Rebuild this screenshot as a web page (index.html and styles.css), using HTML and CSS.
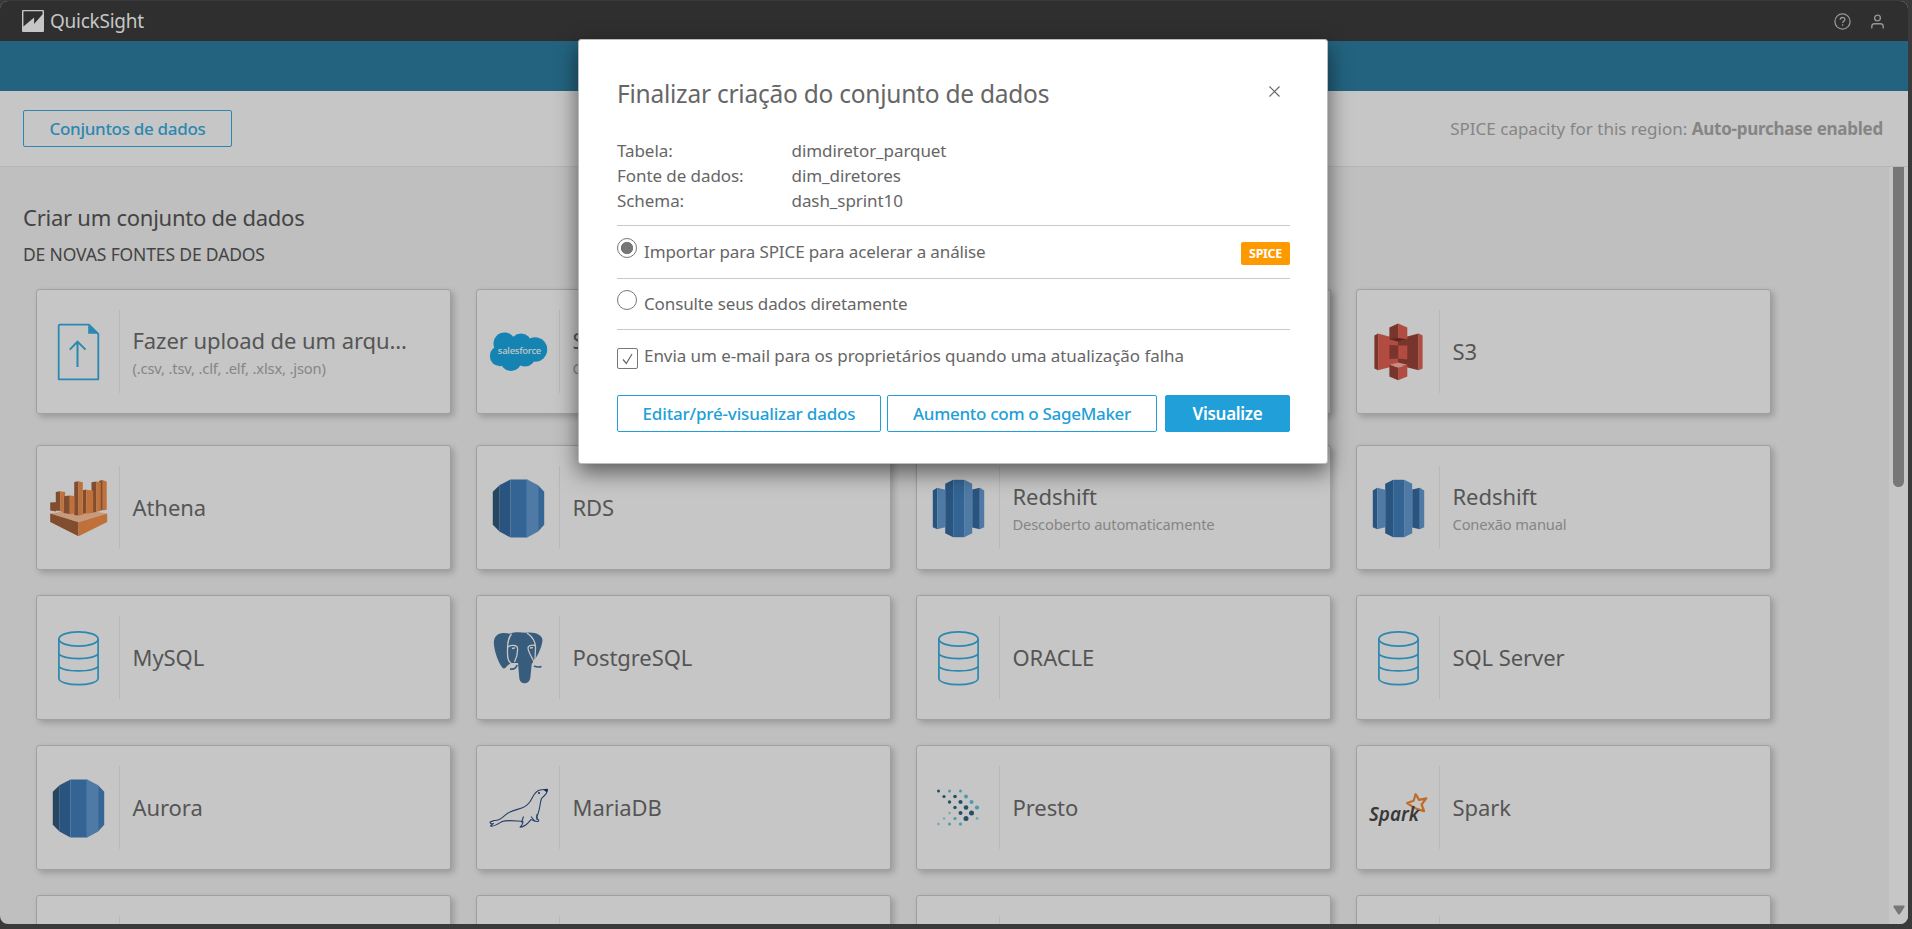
FILE: index.html
```html
<!DOCTYPE html>
<html lang="pt-BR">
<head>
<meta charset="utf-8">
<title>QuickSight</title>
<link rel="stylesheet" href="styles.css">
</head>
<body>
<svg class="defs" width="0" height="0">
  <symbol id="file" viewBox="0 0 60 60"><path d="M11.5 2.7H41L50.3 12V57.3H10.7V3.5z" fill="none" stroke="#2b88b0" stroke-width="1.8" stroke-linejoin="round"/><path d="M40.2 3v8.8h10z" fill="#2b88b0"/><path d="M29.5 45V20M21.8 27.6l7.7-8 8 8" fill="none" stroke="#2b88b0" stroke-width="2"/></symbol>
  <symbol id="athena" viewBox="0 0 60 60"><path d="M2.200 35.500 30.500 31l28.700 4.500-28.700 8.800z" fill="#c79a7c"/><g fill="#824d2f"><path d="M2.200 24.500l5.600-.5v9.500l-5.600-1zM7.800 14l4.400-.7V33l-4.400-.5zM15.500 18.200l6.300-.7V36l-6.300-1zM26.200 4l4.300-.7v34.200l-4.300-.6zM34.800 12.200l3.400-.7V35l-3.400 1zM43.500 4.200l5-.7V34l-5 .5zM51.200 2.700l3.600-.7v30l-3.600.8zM2.200 35.500l28.300 8.700v14L2.200 44z"/></g><g fill="#c0713a"><path d="M12.200 13.300l5 .7v4l-1.700.2V34l-3.300-.5zM21.800 17.500l4.400.6v17.500l-4.400.6zM30.500 3.300l4.300 1v32.500l-4.300.8zM38.200 11.700l7 1v22l-7 1zM48.500 3.500l4.300.8V33l-4.300.8zM54.800 2.200l3.900 1.200v28.400l-3.900.7zM59.200 35.500v8.500L30.500 58.200v-14z"/></g></symbol>
  <symbol id="rds" viewBox="0 0 60 60"><path fill="#26475f" d="M4.800 13.800l6.700-6.600v46.300l-6.700-6.700z"/><path fill="#2a5480" d="M11.400 7.200l11.100-5.700v58l-11.100-6z"/><path fill="#336493" d="M22.500 1.500h16.700v58H22.500z"/><path fill="#4e7aa5" d="M38.500 1.500h.7l11 5.700v46.300l-11 6h-.7z"/><path fill="#356696" d="M50.100 7.200l6.100 6.600v33l-6.100 6.700z"/></symbol>
  <symbol id="redshift" viewBox="0 0 60 60"><path fill="#2a5480" d="M4.800 12.500l4.400-2.700v41.400l-4.400-2zM44.200 11.600l7.600-1.800v41.400l-7.600-1.700zM17.200 5.800l8-4v57.400l-8-4z"/><path fill="#4e7aa5" d="M9.200 9.800l8 1.900v37.600l-8 1.900zM51.800 9.800l4.400 2.700v36.700l-4.400 2zM36.200 1.800l8 4v49.400l-8 4z"/><path fill="#336493" d="M25.200 1.800h11v57.400h-11z"/></symbol>
  <symbol id="db" viewBox="0 0 60 60"><g fill="none" stroke="#2b88b0" stroke-width="1.700"><ellipse cx="30.500" cy="11" rx="19.600" ry="7.200"/><path d="M10.900 11v39.500c1 8.200 38.200 8.200 39.200 0V11M10.900 25.500c3 6.700 36.200 6.700 39.200 0M10.900 38c3 6.600 36.200 6.600 39.200 0"/></g></symbol>
  <symbol id="s3" viewBox="0 0 60 60"><path fill="#77352c" d="M6.400 13.500l3.700-2v36.700l-3.700-1.700zM50.600 11.500v36.700L30 43V17z"/><path fill="#b24c41" d="M10.100 11.500L30 17v26l-19.900 5.200zM50.600 11.500l4 2v33l-4 1.700z"/><path fill="#b24c41" d="M30.100 1.500l9.200 4v11.700l-9.200 2.300zM30.100 23.500h9.200v14l-9.200-1zM30.100 45.500l9.200-2.700v11.700l-9.200 3.700z"/><path fill="#77352c" d="M30.100 1.500l-8.700 4v11.700l8.700 2.300zM30.100 23.500l-8.700-.5v14l8.700-.5zM30.100 45.500l-8.700-2.700v11.700l8.700 3.700z"/><path fill="#582722" d="M21.400 17.200l8.700-1.200 9.200 1.200-9.200 2.300z"/><path fill="#ca8982" d="M21.400 42.800l8.700-2.300 9.200 2.300-9.200 2.500z"/></symbol>
  <symbol id="postgres" viewBox="0 0 60 60"><path fill="#385c7c" d="M22 5.700C15 4 6.500 4.500 5.800 14c.2 8 3.500 18 7.700 24.500 1.800 3 3.500 2.500 6-1L23 35h7l1.300 15c.5 7 10 7 11 0l1.400-14C48 31 54 20 54.500 12 54 6 45 3.300 38 4.800 33 4.300 27 3.500 22 5.700z"/><path d="M23.500 6c-4.500 5-4 13-4 20 0 6 2 9 5 10.500M39 5c6 4 9 9 8.500 16-.5 6 0 9-1 13M20 19c3.500-2.500 9-2 9.500 1 .5 6-.5 9-3 14M48 18c-3-1.500-8-1-8 2 .5 5 4 9 6.500 15" fill="none" stroke="#c6c6c6" stroke-width="1.300"/><path d="M22 41c3 .5 6 0 7-4M46 38c2 1 5 1.300 7.500.5" fill="none" stroke="#385c7c" stroke-width="1.600"/><path d="M24 20.500l3-.6M42 20l3-.4" stroke="#c6c6c6" stroke-width="1.400"/></symbol>
  <symbol id="mariadb" viewBox="0 0 60 60"><g fill="none" stroke="#263f68" stroke-width="1.100" stroke-linejoin="round"><path d="M2 44c2-.5 3-1 4-1.500 7 1 10-6 16-8.500 8-4 14-2.500 19-9 4-5 5-12 11-13 3-.5 5-.5 7.500-.8.3 5-3.500 6.500-6 9.300-2 6-1.500 13-5 18.500.5 2.500 3.500 3 1.500 4.500-2 .5-4-1-7-2-2.500 3-5 7-11 7.700 1-1.500 3-2 3-5.700-8-.5-15-2-21 0-4 2.500-8 5.500-11.500 4.500 0-1 3-2 3-2.500C4.500 46 2 46 2 44z"/><path d="M33.500 44.500l2-6M43 38.500l4 5M49 36v6"/></g><path fill="#172e50" d="M55 11.500l4.500-.5-.5 3.500zM50 15a1 1 0 1 0 2 0 1 1 0 0 0-2 0z"/></symbol>
  <symbol id="presto" viewBox="0 0 60 60"><g fill="#235064"><circle cx="10.500" cy="13" r="1.500"/><circle cx="16" cy="18.500" r="1.600"/><circle cx="21.500" cy="24" r="1.700"/><circle cx="27" cy="18.500" r="1.800"/><circle cx="32.500" cy="24" r="2.100"/><circle cx="27" cy="29.500" r="1.700"/><circle cx="38" cy="29.500" r="2.300"/><circle cx="32.500" cy="35" r="2"/><circle cx="43.500" cy="35" r="2.500"/><circle cx="38" cy="40.500" r="2.500"/></g><g fill="#4d98ae"><circle cx="21.500" cy="13" r="1.500"/><circle cx="32.500" cy="13" r="1.500"/><circle cx="38" cy="18.500" r="1.900"/><circle cx="43.500" cy="24" r="2"/><circle cx="49" cy="29.500" r="2.100"/><circle cx="27" cy="40.500" r="1.600"/><circle cx="21.500" cy="46" r="1.500"/><circle cx="32.500" cy="46" r="1.600"/></g><g fill="#75a9b6"><circle cx="49" cy="40.500" r="1.400"/><circle cx="16" cy="40.500" r="1.200"/><circle cx="21.500" cy="35" r="1.200"/><circle cx="10.500" cy="46" r="1.300"/></g></symbol>
</svg>

<div class="window">
  <header class="topbar">
    <div class="brand">
      <svg width="20" height="22" viewBox="0 0 20 22" preserveAspectRatio="none"><rect width="20" height="22" rx="1" fill="#c6c6c6"/><path d="M1.300 1.300h17.400v3L11 14V7.500L1.300 16.500z" fill="#2f2f2f"/></svg>
      <span>QuickSight</span>
    </div>
    <div class="tools">
      <svg width="17" height="17" viewBox="0 0 17 17" fill="none" stroke="#969696" stroke-width="1.300"><circle cx="8.500" cy="8.500" r="7.600"/><path d="M6.200 6.800c0-3 4.800-3 4.800-.3 0 1.700-2.400 1.600-2.400 3.500M8.600 11.300v1.500"/></svg>
      <svg width="13" height="15" viewBox="0 0 13 15" fill="none" stroke="#969696" stroke-width="1.400"><circle cx="6.500" cy="4" r="2.900"/><path d="M.8 14.500v-2c0-1.500 1-2.800 2.600-2.800h6.200c1.600 0 2.600 1.300 2.600 2.800v2"/></svg>
    </div>
  </header>
  <div class="bluebar"></div>
  <div class="subheader">
    <button class="btn btn-dim">Conjuntos de dados</button>
    <p class="capacity">SPICE capacity for this region: <b>Auto-purchase enabled</b></p>
  </div>
  <div class="body">
    <main class="content">
      <h1>Criar um conjunto de dados</h1>
      <h2>DE NOVAS FONTES DE DADOS</h2>
      <div class="grid first">
        <div class="card"><div class="icon"><svg><use href="#file"/></svg></div><div class="label two"><strong>Fazer upload de um arqu…</strong><small>(.csv, .tsv, .clf, .elf, .xlsx, .json)</small></div></div>
        <div class="card"><div class="icon"><svg viewBox="0 -10 60 60"><g fill="#1684b2"><circle cx="16.500" cy="11.500" r="11"/><circle cx="33" cy="12" r="10.500"/><circle cx="47" cy="17.500" r="12.200"/><circle cx="12" cy="24" r="10.200"/><circle cx="23" cy="28.500" r="10.500"/><circle cx="37" cy="24" r="10.500"/><path d="M14 10h30v20H14z"/></g><text x="9.800" y="22" textLength="43.500" class="sf-word">salesforce</text></svg></div><div class="label two"><strong>Salesforce</strong><small>Conecte-se ao Salesforce</small></div></div>
        <div class="card"></div>
        <div class="card"><div class="icon"><svg><use href="#s3"/></svg></div><div class="label"><strong>S3</strong></div></div>
      </div>
      <div class="grid">
        <div class="card"><div class="icon"><svg><use href="#athena"/></svg></div><div class="label"><strong>Athena</strong></div></div>
        <div class="card"><div class="icon"><svg><use href="#rds"/></svg></div><div class="label"><strong>RDS</strong></div></div>
        <div class="card"><div class="icon"><svg><use href="#redshift"/></svg></div><div class="label two"><strong>Redshift</strong><small>Descoberto automaticamente</small></div></div>
        <div class="card"><div class="icon"><svg><use href="#redshift"/></svg></div><div class="label two"><strong>Redshift</strong><small>Conexão manual</small></div></div>
        <div class="card"><div class="icon"><svg><use href="#db"/></svg></div><div class="label"><strong>MySQL</strong></div></div>
        <div class="card"><div class="icon"><svg><use href="#postgres"/></svg></div><div class="label"><strong>PostgreSQL</strong></div></div>
        <div class="card"><div class="icon"><svg><use href="#db"/></svg></div><div class="label"><strong>ORACLE</strong></div></div>
        <div class="card"><div class="icon"><svg><use href="#db"/></svg></div><div class="label"><strong>SQL Server</strong></div></div>
        <div class="card"><div class="icon"><svg><use href="#rds"/></svg></div><div class="label"><strong>Aurora</strong></div></div>
        <div class="card"><div class="icon"><svg><use href="#mariadb"/></svg></div><div class="label"><strong>MariaDB</strong></div></div>
        <div class="card"><div class="icon"><svg><use href="#presto"/></svg></div><div class="label"><strong>Presto</strong></div></div>
        <div class="card"><div class="icon"><svg viewBox="0 0 60 60"><path d="M47.600 16.200l3.500 5.600 7.200-1.500-4.700 6.200 2.500 6.600-7.500-2.200-4.500-2.500-5-3.400 6.500-2.300z" fill="none" stroke="#bf6c2b" stroke-width="2.200" stroke-linejoin="round"/><text x="1" y="42.500" textLength="50" lengthAdjust="spacingAndGlyphs" class="spark-word">Spark</text></svg></div><div class="label"><strong>Spark</strong></div></div>
        <div class="card"><div class="icon"></div></div>
        <div class="card"><div class="icon"></div></div>
        <div class="card"><div class="icon"></div></div>
        <div class="card"><div class="icon"></div></div>
      </div>
    </main>
    <div class="scrollbar"><div class="thumb"></div><svg width="12" height="10" viewBox="0 0 12 10"><path d="M1 .5h10q1 .5.5 1.500L7 9q-1 1-2 0L.5 2Q0 1 1 .5z" fill="#777"/></svg></div>
  </div>
</div>

<section class="modal">
  <div class="modal-head">
    <h3>Finalizar criação do conjunto de dados</h3>
    <svg class="close" width="11" height="11" viewBox="0 0 11 11"><path d="M.5.5l10 10M10.500.5l-10 10" stroke="#666" stroke-width="1.200"/></svg>
  </div>
  <dl>
    <dt>Tabela:</dt><dd>dimdiretor_parquet</dd>
    <dt>Fonte de dados:</dt><dd>dim_diretores</dd>
    <dt>Schema:</dt><dd>dash_sprint10</dd>
  </dl>
  <div class="option spice">
    <span class="radio on"></span><span class="opt-text">Importar para SPICE para acelerar a análise</span><span class="badge">SPICE</span>
  </div>
  <div class="option direct">
    <span class="radio"></span><span class="opt-text">Consulte seus dados diretamente</span>
  </div>
  <div class="option mail">
    <span class="check"><svg width="11" height="12" viewBox="0 0 11 12"><path d="M1 6.500L4.300 10.500 10 1" fill="none" stroke="#666" stroke-width="1.200"/></svg></span><span class="opt-text">Envia um e-mail para os proprietários quando uma atualização falha</span>
  </div>
  <div class="actions">
    <button class="btn edit">Editar/pré-visualizar dados</button>
    <button class="btn sage">Aumento com o SageMaker</button>
    <button class="btn primary">Visualize</button>
  </div>
</section>
</body>
</html>
```
FILE: styles.css
```css
* { box-sizing: border-box; }
body {
  margin: 0;
  height: 929px;
  padding-top: 1px;
  overflow: hidden;
  background: #3a3a3a;
  font-family: "Noto Sans", sans-serif;
  color: #555;
}
h1, h2, h3, p, dl, dd { margin: 0; font-weight: 400; }
.defs { position: absolute; }
.window {
  width: 1908px;
  height: 923px;
  display: flex;
  flex-direction: column;
  overflow: hidden;
  border-radius: 8px;
  background: #bfbfbf;
}
.topbar {
  height: 40px;
  flex: none;
  display: flex;
  align-items: center;
  justify-content: space-between;
  padding: 0 24px 0 22px;
  background: #2f2f2f;
}
.brand svg { width: 22px; }
.brand { display: flex; align-items: center; gap: 6px; color: #c6c6c6; font-size: 19px; letter-spacing: -.25px; }
.brand span { line-height: 40px; }
.tools { display: flex; align-items: center; gap: 20px; }
.bluebar { height: 50px; flex: none; background: #23637f; }
.subheader {
  height: 76px;
  flex: none;
  display: flex;
  align-items: center;
  justify-content: space-between;
  padding: 0 25px 0 23px;
  background: #c6c6c6;
  border-bottom: 1px solid #b5b5b5;
}
.btn {
  height: 37px;
  padding: 0;
  border: 1px solid #219fd9;
  border-radius: 2px;
  background: transparent;
  color: #219fd9;
  font: 500 17px/33px "Noto Sans", sans-serif;
  letter-spacing: -.3px;
  white-space: nowrap;
}
.btn-dim { width: 209px; border-color: #2b88b0; color: #2b88b0; }
.capacity { color: #858585; font-size: 17px; letter-spacing: 0; line-height: 33px; }
.capacity b { letter-spacing: -.25px; }
.body { flex: 1; min-height: 0; display: flex; }
.content { flex: 1; padding: 34px 0 0 36px; overflow: hidden; }
.content h1 { margin-left: -13px; font-size: 22px; line-height: 33px; letter-spacing: -.25px; color: #444; }
.content h2 { margin-left: -13px; padding-top: 2px; font-size: 17.500px; line-height: 36px; letter-spacing: -.15px; color: #444; }
.grid { display: grid; grid-template-columns: repeat(4, 415px); grid-auto-rows: 125px; gap: 25px; }
.first { margin: 17px 0 31px; }
.card {
  display: flex;
  align-items: center;
  background: #c6c6c6;
  border: 1px solid #a0a0a0;
  border-radius: 3px;
  box-shadow: 3px 3px 6px rgba(0, 0, 0, .2);
}
.icon { width: 83px; height: 83px; flex: none; display: flex; align-items: center; justify-content: center; padding-right: 1px; border-right: 1px solid #b8b8b8; }
.icon svg { width: 60px; height: 60px; }
.label { padding: 0 0 2px 12.500px; display: flex; flex-direction: column; white-space: nowrap; }
.label strong { font-weight: 400; font-size: 22px; line-height: 30px; letter-spacing: -.07px; }
.label small { font-size: 14.700px; line-height: 26px; letter-spacing: -.15px; color: #858585; }
.label.two { padding-bottom: 0; padding-top: 2px; }
.sf-word { font: 500 9.500px "Noto Sans", sans-serif; fill: #c6c6c6; }
.spark-word { font: italic 600 20px "Noto Sans", sans-serif; fill: #383838; }
.scrollbar { width: 19px; display: flex; flex-direction: column; align-items: center; justify-content: space-between; padding-bottom: 9px; background: #c6c6c6; }
.thumb { width: 11px; height: 320px; background: #777; border-radius: 0 0 6px 6px; }

.modal {
  position: absolute;
  left: 578px;
  top: 39px;
  width: 750px;
  height: 425px;
  padding: 33px 37px 0 38px;
  background: #fff;
  border: 1px solid #bcbcbc;
  border-radius: 3px;
  box-shadow: 0 8px 22px rgba(0, 0, 0, .55);
  color: #666;
}
.modal-head { display: flex; justify-content: space-between; height: 65px; padding-right: 10px; }
.modal-head h3 { font-size: 24.500px; line-height: 42px; letter-spacing: -.24px; }
.close { margin-top: 13px; }
dl { display: grid; grid-template-columns: 174.500px 1fr; font-size: 17px; line-height: 25px; letter-spacing: -.07px; padding-bottom: 12px; }
.option { display: flex; align-items: flex-start; border-top: 1px solid #c9c9c9; font-size: 17px; letter-spacing: -.12px; }
.opt-text { line-height: 24px; padding-left: 7px; white-space: nowrap; }
.spice { height: 53px; padding-top: 12px; }
.spice .opt-text { padding-top: 2px; }
.direct { height: 51px; padding-top: 11px; }
.direct .opt-text { padding-top: 2px; }
.mail { height: 66px; padding-top: 14px; letter-spacing: -.07px; }
.radio { width: 20px; height: 20px; border: 1.500px solid #777; border-radius: 50%; }
.radio.on { background: radial-gradient(circle, #777 5.800px, #fff 6.400px); }
.check { width: 21px; height: 21px; margin-top: 4px; border: 1px solid #777; border-radius: 2px; display: flex; align-items: center; justify-content: center; }
.mail .opt-text { padding-left: 6px; }
.badge { margin: 4px 0 0 auto; width: 49px; height: 23px; border-radius: 2px; background: #ff9900; color: #fff; font-size: 12.500px; font-weight: 700; line-height: 23px; text-align: center; letter-spacing: -.35px; }
.actions { display: flex; }
.edit { width: 264px; letter-spacing: -.17px; }
.sage { width: 270px; margin: 0 8px 0 6px; }
.primary { width: 125px; background: #219fd9; color: #fff; font-weight: 600; }
```
